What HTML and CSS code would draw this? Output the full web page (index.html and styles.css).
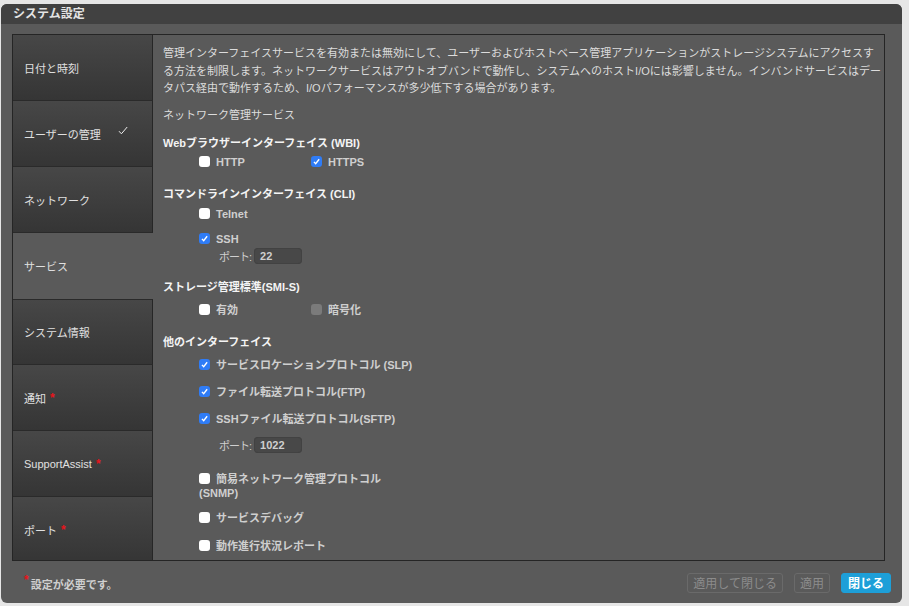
FILE: index.html
```html
<!DOCTYPE html>
<html lang="ja">
<head>
    <meta charset="UTF-8">
    <title>システム設定</title>
    <link rel="stylesheet" href="styles.css">
</head>
<body>

    <div class="window">
        <div class="titlebar">システム設定</div>

        <div class="panel">
            <!-- Left navigation -->
            <div class="sidebar">
                <div class="nav-item">日付と時刻</div>
                <div class="nav-item">ユーザーの管理
                    <svg class="done" viewBox="0 0 10 9"><path d="M1 5.2 L3.4 7.8 L9.2 1"/></svg>
                </div>
                <div class="nav-item">ネットワーク</div>
                <div class="nav-item active">サービス</div>
                <div class="nav-item">システム情報</div>
                <div class="nav-item">通知<span class="req">*</span></div>
                <div class="nav-item">SupportAssist<span class="req">*</span></div>
                <div class="nav-item">ポート<span class="req">*</span></div>
            </div>

            <!-- Services page -->
            <div class="content">
                <p class="desc">管理インターフェイスサービスを有効または無効にして、ユーザーおよびホストベース管理アプリケーションがストレージシステムにアクセスする方法を制限します。ネットワークサービスはアウトオブバンドで動作し、システムへのホストI/Oには影響しません。インバンドサービスはデータパス経由で動作するため、I/Oパフォーマンスが多少低下する場合があります。</p>
                <div class="subhead">ネットワーク管理サービス</div>

                <div class="group-title g-web">Webブラウザーインターフェイス (WBI)</div>
                <div class="row r-http">
                    <label class="opt wide"><span class="cb"></span>HTTP</label>
                    <label class="opt"><span class="cb on"><svg viewBox="0 0 12 12"><path d="M3.2 6.4 L5.1 8.4 L8.9 3.6"/></svg></span>HTTPS</label>
                </div>

                <div class="group-title g-cli">コマンドラインインターフェイス (CLI)</div>
                <div class="row r-telnet">
                    <label class="opt"><span class="cb"></span>Telnet</label>
                </div>
                <div class="row r-ssh">
                    <label class="opt"><span class="cb on"><svg viewBox="0 0 12 12"><path d="M3.2 6.4 L5.1 8.4 L8.9 3.6"/></svg></span>SSH</label>
                </div>
                <div class="port r-port1">
                    <span class="port-label">ポート:</span>
                    <span class="port-input">22</span>
                </div>

                <div class="group-title g-smis">ストレージ管理標準(SMI-S)</div>
                <div class="row r-smis">
                    <label class="opt wide"><span class="cb"></span>有効</label>
                    <label class="opt"><span class="cb off"></span>暗号化</label>
                </div>

                <div class="group-title g-other">他のインターフェイス</div>
                <div class="row r-slp">
                    <label class="opt"><span class="cb on"><svg viewBox="0 0 12 12"><path d="M3.2 6.4 L5.1 8.4 L8.9 3.6"/></svg></span>サービスロケーションプロトコル (SLP)</label>
                </div>
                <div class="row r-next">
                    <label class="opt"><span class="cb on"><svg viewBox="0 0 12 12"><path d="M3.2 6.4 L5.1 8.4 L8.9 3.6"/></svg></span>ファイル転送プロトコル(FTP)</label>
                </div>
                <div class="row r-next">
                    <label class="opt"><span class="cb on"><svg viewBox="0 0 12 12"><path d="M3.2 6.4 L5.1 8.4 L8.9 3.6"/></svg></span>SSHファイル転送プロトコル(SFTP)</label>
                </div>
                <div class="port r-port2">
                    <span class="port-label">ポート:</span>
                    <span class="port-input">1022</span>
                </div>
                <div class="row r-snmp">
                    <label class="opt wrap"><span class="cb"></span>簡易ネットワーク管理プロトコル (SNMP)</label>
                </div>
                <div class="row r-debug">
                    <label class="opt"><span class="cb"></span>サービスデバッグ</label>
                </div>
                <div class="row r-report">
                    <label class="opt"><span class="cb"></span>動作進行状況レポート</label>
                </div>
            </div>
        </div>

        <div class="footer">
            <div class="note"><span class="req">*</span>設定が必要です。</div>
            <div class="buttons">
                <button class="btn" disabled>適用して閉じる</button>
                <button class="btn" disabled>適用</button>
                <button class="btn primary">閉じる</button>
            </div>
        </div>
    </div>

</body>
</html>
```

FILE: styles.css
```css
body { margin: 0; background: #e6e6e6; font-family: "Liberation Sans", "Noto Sans CJK JP", sans-serif; color: #dcdcdc; font-size: 11px; }

.window { margin: 4px 7px 3px 1px; height: 599px; background: #5a5a5a; border-radius: 6px; overflow: hidden; display: flex; flex-direction: column; }
.titlebar { height: 20px; line-height: 20px; background: #414141; padding-left: 12px; font-size: 12px; font-weight: bold; color: #e4e4e4; }

.panel { margin: 10px 17px 0 11px; height: 525px; border: 1px solid #252525; display: flex; overflow: hidden; }

/* Sidebar */
.sidebar { width: 140px; flex: none; }
.nav-item { height: 65px; border-right: 1px solid #262626; border-bottom: 1px solid #2a2a2a; background: linear-gradient(to bottom, #474747, #353535); display: flex; align-items: center; padding-left: 11px; font-size: 11px; color: #e0e0e0; }
.nav-item.active { background: none; border-right-color: transparent; border-bottom-color: transparent; }
.nav-item.active + .nav-item { border-top: 1px solid #2a2a2a; height: 64px; }
.done { width: 10px; height: 9px; margin-left: 17px; margin-top: -6px; fill: none; stroke: #eee; stroke-width: 1; }
.req { color: #e8141c; font-weight: bold; font-size: 12px; vertical-align: 5px; margin-left: 4px; }

/* Content */
.content { flex: 1; padding: 10px 1px 0 10px; }
.desc { margin: 0; line-height: 17.5px; }
.subhead { margin-top: 8px; line-height: 18px; }
.group-title { line-height: 18px; font-weight: bold; color: #f4f4f4; }
.g-web { margin-top: 10px; }
.g-cli, .g-smis, .g-other { margin-top: 14px; }

.row { display: flex; padding-left: 36px; line-height: 18px; }
.r-http { margin-top: 1px; }
.r-telnet { margin-top: 2px; }
.r-ssh { margin-top: 7px; }
.r-smis, .r-slp { margin-top: 5px; }
.r-next { margin-top: 9px; }
.r-snmp { margin-top: 19px; }
.r-debug { margin-top: 9px; }
.r-report { margin-top: 10px; }

.opt { display: flex; align-items: center; font-weight: bold; color: #cfcfcf; }
.opt.wide { width: 112px; }
.opt.wrap { display: block; width: 190px; line-height: 14px; }
.opt.wrap .cb { display: inline-block; vertical-align: -1px; }

.cb { width: 11px; height: 11px; border-radius: 3px; background: #fff; margin-right: 6px; flex: none; }
.cb.on { background: #2f7cf6; }
.cb.off { background: #7b7b7b; }
.cb svg { display: block; width: 11px; height: 11px; fill: none; stroke: #fff; stroke-width: 1.5; }

.port { display: flex; align-items: center; height: 16px; padding-left: 56px; }
.r-port1 { margin-top: 0; }
.r-port2 { margin-top: 9px; }
.port-label { white-space: nowrap; margin-right: 3px; color: #cfcfcf; letter-spacing: -1px; }
.port-input { width: 42px; height: 16px; line-height: 16px; padding-left: 6px; background: #484848; border-radius: 4px; box-shadow: inset 0 0 0 1px #424242; font-weight: bold; color: #cfcfcf; }

/* Footer */
.footer { flex: 1; display: flex; align-items: center; justify-content: space-between; padding: 0 11px 0 23px; }
.note { font-weight: bold; color: #cfcfcf; }
.note .req { margin-left: 0; margin-right: 2px; }
.buttons { display: flex; gap: 11px; margin-top: 1px; }
.btn { height: 20px; padding: 0 5px; border: 1px solid #6a6a6a; border-radius: 3px; background: transparent; color: #8c8c8c; font-family: inherit; font-size: 12px; }
.btn.primary { background: #1d9fd8; border-color: #1d9fd8; color: #fff; font-weight: bold; padding: 0 6px; }
```
